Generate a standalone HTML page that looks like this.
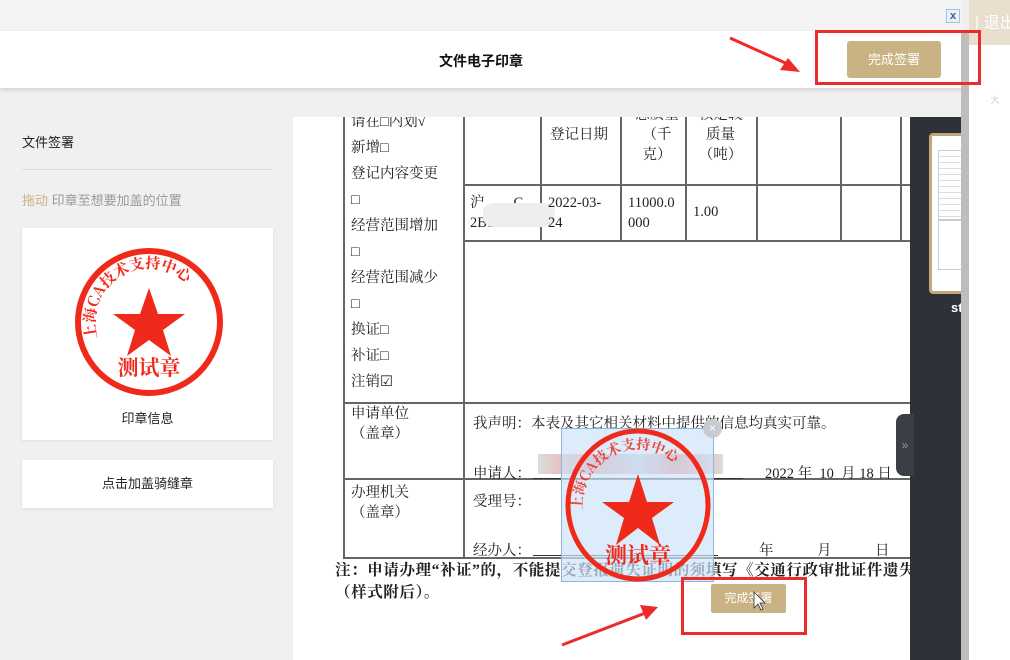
<!DOCTYPE html>
<html><head><meta charset="utf-8"><style>
*{margin:0;padding:0;box-sizing:border-box}
body{width:1010px;height:660px;overflow:hidden;background:#f0f0f0;position:relative;font-family:"Liberation Sans","Noto Sans CJK SC",sans-serif}
.a{position:absolute}
.s{font-family:"Liberation Serif","Noto Serif CJK SC",serif;font-size:14.5px;color:#222;white-space:nowrap}
.hl{position:absolute;height:1.5px;background:#666}
.vl{position:absolute;width:1.5px;background:#666}
</style></head><body>
<div class="a" style="left:969px;top:0;width:41px;height:660px;background:#fff"></div>
<div class="a" style="left:969px;top:0;width:41px;height:45px;background:#e9dfcf"></div>
<div class="a" style="left:975px;top:9px;font-size:16px;color:#fff;white-space:nowrap">|&nbsp;退出</div>
<div class="a" style="left:985px;top:93px;font-size:9px;color:#ccc">· 大</div>
<div class="a" style="left:0;top:0;width:962px;height:31px;background:#f3f3f3"></div>
<div class="a" style="left:946px;top:9px;width:14px;height:14px;border:1px solid #a9c0dd;background:#e8f0fa;color:#3a5fa0;font-size:11px;line-height:12px;text-align:center;font-weight:bold">x</div>
<div class="a" style="left:0;top:31px;width:962px;height:57px;background:#fff;box-shadow:0 2px 4px rgba(0,0,0,.12)"></div>
<div class="a" style="left:0;top:51px;width:962px;text-align:center;font-size:14px;font-weight:bold;color:#111">文件电子印章</div>
<div class="a" style="left:847px;top:41px;width:94px;height:37px;background:#c9b283;border-radius:3px;color:#fff;font-size:13px;line-height:37px;text-align:center">完成签署</div>
<div class="a" style="left:22px;top:132px;font-size:13px;color:#222">文件签署</div>
<div class="a" style="left:22px;top:169px;width:250px;height:1px;background:#ddd"></div>
<div class="a" style="left:22px;top:190px;font-size:13px;color:#999"><span style="color:#c9b283">拖动</span> 印章至想要加盖的位置</div>
<div class="a" style="left:22px;top:228px;width:251px;height:212px;background:#fff;box-shadow:0 1px 3px rgba(0,0,0,.08)"></div>
<svg class="a" style="left:72px;top:244px" width="156" height="156" viewBox="0 0 156 156">
<circle cx="77" cy="78" r="71" fill="none" stroke="#f02a1a" stroke-width="6"/>
<polygon points="77,44 86,70 113,70 91,86 99,112 77,96 55,112 63,86 41,70 68,70" fill="#f02a1a"/>
<text x="77" y="131" text-anchor="middle" font-family="Noto Serif CJK SC" font-weight="bold" font-size="21" fill="#f02a1a">测试章</text>
<path id="arc" d="M26,96 A54,54 0 1 1 128,96" fill="none"/>
<text font-family="Noto Serif CJK SC" font-size="15" font-weight="bold" fill="#f02a1a"><textPath href="#arc" startOffset="1%">上海CA技术支持中心</textPath></text>
</svg>
<div class="a" style="left:22px;top:408px;width:251px;text-align:center;font-size:13px;color:#222">印章信息</div>
<div class="a" style="left:22px;top:460px;width:251px;height:48px;background:#fff;box-shadow:0 1px 3px rgba(0,0,0,.08);text-align:center;line-height:48px;font-size:13px;color:#222">点击加盖骑缝章</div>
<div class="a" style="left:293px;top:117px;width:617px;height:543px;background:#fff"></div>
<div class="a" style="left:293px;top:117px;width:617px;height:543px;overflow:hidden">
 <div class="vl" style="left:50px;top:0;height:441px"></div>
 <div class="vl" style="left:170px;top:0;height:441px"></div>
 <div class="vl" style="left:247px;top:0;height:124px"></div>
 <div class="vl" style="left:327px;top:0;height:124px"></div>
 <div class="vl" style="left:392px;top:0;height:124px"></div>
 <div class="vl" style="left:463px;top:0;height:124px"></div>
 <div class="vl" style="left:547px;top:0;height:124px"></div>
 <div class="vl" style="left:607px;top:0;height:124px"></div>
 <div class="hl" style="left:170px;top:67px;width:450px"></div>
 <div class="hl" style="left:170px;top:123px;width:450px"></div>
 <div class="hl" style="left:50px;top:285px;width:570px"></div>
 <div class="hl" style="left:50px;top:361px;width:570px"></div>
 <div class="hl" style="left:50px;top:440px;width:570px"></div>
 <div class="a s" style="left:58px;top:-8px;line-height:26px">请在□内划√<br>新增□<br>登记内容变更<br>□<br>经营范围增加<br>□<br>经营范围减少<br>□<br>换证□<br>补证□<br>注销☑</div>
 <div class="a s" style="left:257px;top:8px;line-height:20px">登记日期</div>
 <div class="a s" style="left:339px;top:-12px;line-height:20px;text-align:center;width:50px">总质量<br>（千<br>克）</div>
 <div class="a s" style="left:400px;top:-12px;line-height:20px;text-align:center;width:55px">核定载<br>质量<br>（吨）</div>
 <div class="a s" style="left:177px;top:76px;line-height:20px">沪　　C<br>2B1W2</div>
 <div class="a" style="left:190px;top:86px;width:72px;height:24px;background:#eee;border-radius:10px"></div>
 <div class="a s" style="left:255px;top:76px;line-height:20px">2022-03-<br>24</div>
 <div class="a s" style="left:335px;top:76px;line-height:20px">11000.0<br>000</div>
 <div class="a s" style="left:400px;top:87px">1.00</div>
 <div class="a s" style="left:58px;top:287px;line-height:20px">申请单位<br>（盖章）</div>
 <div class="a s" style="left:58px;top:366px;line-height:20px">办理机关<br>（盖章）</div>
 <div class="a s" style="left:180px;top:295px">我声明：本表及其它相关材料中提供的信息均真实可靠。</div>
 <div class="a s" style="left:180px;top:345px">申请人：</div>
 <div class="hl" style="left:240px;top:361px;width:210px;height:1px;background:#333"></div>
 <div class="a" style="left:245px;top:337px;width:185px;height:20px;background:linear-gradient(90deg,#ddd,#e99 30%,#ccd 55%,#e88 75%,#ddd)"></div>
 <div class="a s" style="left:472px;top:345px">2022 年&nbsp; 10&nbsp; 月 18 日</div>
 <div class="a s" style="left:180px;top:373px">受理号：</div>
 <div class="a s" style="left:180px;top:422px">经办人：</div>
 <div class="hl" style="left:240px;top:438px;width:185px;height:1px;background:#333"></div>
 <div class="a s" style="left:466px;top:422px">年　　　月　　　日</div>
 <div class="a s" style="left:42px;top:443px;font-weight:bold;line-height:22px;font-size:15.5px;letter-spacing:0.6px">注：申请办理“补证”的，不能提交登报遗失证明的须填写《交通行政审批证件遗失<br>（样式附后）。</div>
</div>
<div class="a" style="left:910px;top:117px;width:51px;height:543px;background:#2e3238"></div>
<div class="a" style="left:929px;top:133px;width:40px;height:161px;background:#fff;border:3px solid #bfa77a;border-radius:4px;overflow:hidden">
 <div class="a" style="left:6px;top:14px;width:30px;height:70px;border:1px solid #ccc;background:repeating-linear-gradient(#fff 0 5px,#ddd 5px 6px)"></div>
 <div class="a" style="left:6px;top:84px;width:30px;height:50px;border:1px solid #ccc"></div>
</div>
<div class="a" style="left:951px;top:300px;color:#fff;font-weight:bold;font-size:13px">st</div>
<div class="a" style="left:961px;top:31px;width:8px;height:629px;background:#bdbdbd"></div>
<div class="a" style="left:896px;top:414px;width:18px;height:62px;background:#3a3e45;border-radius:8px 0 0 8px;color:#999;font-size:12px;line-height:62px;text-align:center">»</div>
<div class="a" style="left:561px;top:428px;width:153px;height:154px;background:rgba(205,228,248,.7);border:1px solid #8db6de"></div>
<svg class="a" style="left:561px;top:428px" width="155" height="155" viewBox="0 0 155 155">
<ellipse cx="77" cy="77" rx="70" ry="74" fill="none" stroke="#f02a1a" stroke-width="5"/>
<polygon points="77,46 86,74 113,74 91,90 99,117 77,100 55,117 63,90 41,74 68,74" fill="#f02a1a"/>
<text x="77" y="135" text-anchor="middle" font-family="Noto Serif CJK SC" font-weight="bold" font-size="22" fill="#f02a1a">测试章</text>
<path id="arc2" d="M22,90 A56,58 0 1 1 132,90" fill="none"/>
<text font-family="Noto Serif CJK SC" font-size="14" font-weight="bold" fill="#f02a1a" opacity=".85"><textPath href="#arc2" startOffset="4%">上海CA技术支持中心</textPath></text>
</svg>
<div class="a" style="left:703px;top:419px;width:19px;height:19px;border-radius:50%;background:#c8ccd2;color:#fff;font-size:12px;line-height:19px;text-align:center">×</div>
<div class="a" style="left:711px;top:584px;width:75px;height:29px;background:#c9b283;border-radius:2px;color:#fff;font-size:12px;line-height:29px;text-align:center">完成签署</div>
<div class="a" style="left:815px;top:30px;width:166px;height:55px;border:3px solid #ee2b2b"></div>
<div class="a" style="left:681px;top:577px;width:126px;height:58px;border:3px solid #ee2b2b"></div>
<svg class="a" style="left:0;top:0" width="1010" height="660">
<line x1="730" y1="38" x2="792" y2="66" stroke="#ee2b2b" stroke-width="3"/>
<polygon points="800,72 780,70 788,58" fill="#ee2b2b"/>
<line x1="562" y1="645" x2="648" y2="612" stroke="#ee2b2b" stroke-width="3"/>
<polygon points="658,607 640,605 646,620" fill="#ee2b2b"/>
<polygon points="754,592 754,608 758,604 761,610 763,609 760,603 765,603" fill="#fff" stroke="#333" stroke-width=".8"/>
</svg>
</body></html>
